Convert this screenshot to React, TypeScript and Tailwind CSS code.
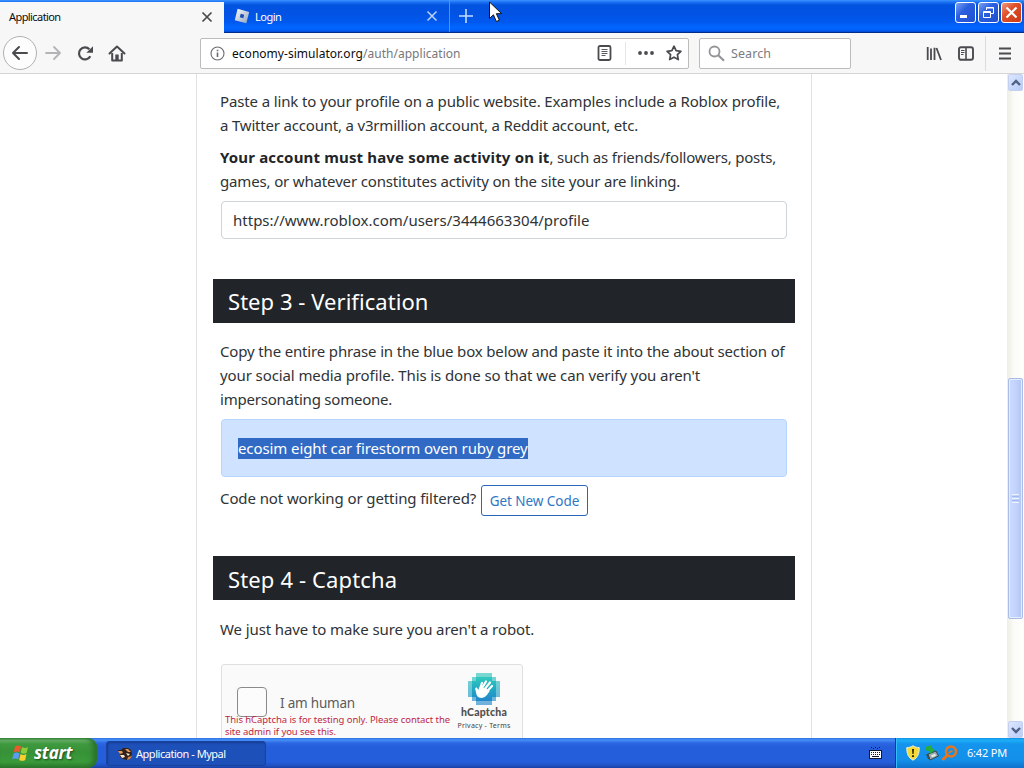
import React from 'react';

const TabBar: React.FC = () => (
  <div className="relative flex h-[33px] shrink-0 border-b border-[#002c8c] bg-[linear-gradient(180deg,#3d95ff_0px,#1b74f5_2px,#0353e0_5px,#0253e4_14px,#0058ee_22px,#0066ff_27px,#0060f8_30px,#003dc0_33px)]">
    <div className="mt-[2px] flex h-[32px] w-[224px] items-center justify-between bg-[#f7f7f8] pr-[11px] pl-[9px]">
      <span className="mb-[2px] text-[11px] tracking-[-0.580px] text-[#0c0c0d]">Application</span>
      <svg className="mb-[2px]" width="12" height="12" viewBox="0 0 12 12" stroke="#4a4a4f" strokeWidth="1.7">
        <path d="M1.5 1.5l9 9M10.5 1.5l-9 9" />
      </svg>
    </div>
    <div className="flex w-[226px] items-center border-r border-[#4f92fb] pr-[11px] pl-[10px]">
      <svg width="16" height="16" viewBox="0 0 16 16">
        <defs>
          <linearGradient id="rbx" x1="0" y1="0" x2="1" y2="1">
            <stop offset="0" stopColor="#ffffff" />
            <stop offset="1" stopColor="#8fa2bd" />
          </linearGradient>
        </defs>
        <path d="M3.600.8L15.200 3.900 12.300 15.200.8 12.200z" fill="url(#rbx)" />
        <path d="M6.700 5.800l3.500.9-.9 3.500-3.500-.9z" fill="#1a4fb0" />
      </svg>
      <span className="mt-[2px] ml-[5px] flex-1 text-[11px] tracking-[-0.500px] text-white">Login</span>
      <svg width="12" height="12" viewBox="0 0 12 12" stroke="#b9d4ff" strokeWidth="1.5">
        <path d="M1.5 1.5l9 9M10.5 1.5l-9 9" />
      </svg>
    </div>
    <svg className="mt-[9px] ml-[9px]" width="14" height="14" viewBox="0 0 14 14" stroke="#c4dbff" strokeWidth="1.6">
      <path d="M7 0v14M0 7h14" />
    </svg>
    <div className="mt-[2px] mr-[2px] ml-auto flex gap-[2px]">
      <div className="h-[21px] w-[21px] rounded-[3px] border border-white bg-[linear-gradient(135deg,#7ba2f4,#2b5fe0_40%,#1f50cf)]">
        <svg width="19" height="19" viewBox="0 0 19 19">
          <path d="M4 12h7v3H4z" fill="#fff" />
        </svg>
      </div>
      <div className="h-[21px] w-[21px] rounded-[3px] border border-white bg-[linear-gradient(135deg,#7ba2f4,#2b5fe0_40%,#1f50cf)]">
        <svg width="19" height="19" viewBox="0 0 19 19" fill="none" stroke="#fff">
          <path d="M7.500 7V4.500h7v6H12M7 5h8" />
          <path d="M4.500 8.500h7v6h-7zM4 9.500h8" />
        </svg>
      </div>
      <div className="h-[21px] w-[21px] rounded-[3px] border border-white bg-[linear-gradient(135deg,#ee9a80,#e0502a_40%,#c63a14)]">
        <svg width="19" height="19" viewBox="0 0 19 19" stroke="#fff" strokeWidth="2.200">
          <path d="M4.500 4.500l10 10M14.500 4.500l-10 10" />
        </svg>
      </div>
    </div>
    <svg className="absolute top-[1px] left-[488px] z-10" width="15" height="23" viewBox="0 0 15 23">
      <path d="M1.500 1v16.500l3.900-3.700 3 6.700 3-1.300-3-6.500h5.300z" fill="#fff" stroke="#111" />
    </svg>
  </div>
);

const Toolbar: React.FC = () => (
  <div className="flex h-[41px] shrink-0 items-center border-b border-[#d5d5d8] bg-[#f7f7f8] pl-[3px]">
    <div className="flex h-[34px] w-[34px] items-center justify-center rounded-full border border-[#b1b1b3] bg-[#fdfdfd]">
      <svg width="18" height="16" viewBox="0 0 18 16" fill="none" stroke="#4a4a4f" strokeWidth="2" strokeLinecap="round" strokeLinejoin="round">
        <path d="M16 8H2M8 2L2 8l6 6" />
      </svg>
    </div>
    <svg className="ml-[8px]" width="17" height="16" viewBox="0 0 17 16" fill="none" stroke="#b4b4b8" strokeWidth="1.800" strokeLinecap="round" strokeLinejoin="round">
      <path d="M1 8h14M9 2l6 6-6 6" />
    </svg>
    <svg className="ml-[15px]" width="17" height="17" viewBox="0 0 17 17">
      <path d="M13.300 11.200A6 6 0 1 1 12.400 4.300" fill="none" stroke="#4a4a4f" strokeWidth="2.200" />
      <path d="M16 1.200v6.600H9.400z" fill="#4a4a4f" />
    </svg>
    <svg className="ml-[14px]" width="18" height="17" viewBox="0 0 18 17">
      <path d="M1.500 8.500L9 1.500l7.500 7" fill="none" stroke="#4a4a4f" strokeWidth="2" strokeLinecap="round" strokeLinejoin="round" />
      <path d="M4.200 8v7.500h9.600V8" fill="none" stroke="#4a4a4f" strokeWidth="2" strokeLinejoin="round" />
      <path d="M7.300 9.500h3.400V16H7.300z" fill="#4a4a4f" />
    </svg>

    <div className="ml-[74px] flex h-[31px] w-[489px] items-center rounded-[2px] border border-[#bdbcb8] bg-white pl-[9px]">
      <svg width="15" height="15" viewBox="0 0 15 15" fill="none" stroke="#6b6b70">
        <circle cx="7.500" cy="7.500" r="6.500" strokeWidth="1.100" />
        <path d="M7.500 6.500V11M7.500 3.700v1.600" strokeWidth="1.600" />
      </svg>
      <span className="mt-[2px] ml-[7px] text-[12px] tracking-[0.030px] whitespace-nowrap text-[#0c0c0d]">
        economy-simulator.org<span className="text-[#77777b]">/auth/application</span>
      </span>
      <svg className="ml-auto" width="15" height="16" viewBox="0 0 15 16" fill="none" stroke="#4a4a4f">
        <rect x="1.500" y="1" width="12" height="14" rx="1.500" strokeWidth="1.800" />
        <path d="M4.500 4.500h6M4.500 6.500h6M4.500 8.500h6M4.500 10.500h4" strokeWidth="0.900" />
      </svg>
      <div className="ml-[13px] h-[23px] w-px bg-[#e6e6e8]" />
      <svg className="ml-[12px]" width="16" height="4" viewBox="0 0 16 4" fill="#4a4a4f">
        <circle cx="2" cy="2" r="1.900" />
        <circle cx="8" cy="2" r="1.900" />
        <circle cx="14" cy="2" r="1.900" />
      </svg>
      <svg className="mr-[6px] ml-[12px]" width="16" height="16" viewBox="0 0 16 16" fill="none" stroke="#4a4a4f" strokeWidth="1.700" strokeLinejoin="round">
        <path d="M8 1.200l2.100 4.500 4.800.6-3.500 3.400.9 4.900L8 12.200l-4.300 2.400.9-4.900L1.100 6.300l4.800-.6z" />
      </svg>
    </div>

    <div className="ml-[10px] flex h-[31px] w-[152px] items-center rounded-[2px] border border-[#bdbcb8] bg-white pl-[8px]">
      <svg width="17" height="17" viewBox="0 0 17 17" fill="none" stroke="#949498">
        <circle cx="6.500" cy="6.500" r="5" strokeWidth="1.800" />
        <path d="M10.300 10.300l5.700 5.500" strokeWidth="2.200" />
      </svg>
      <span className="mt-[2px] ml-[6px] text-[12.500px] tracking-[0.100px] text-[#7b7b80]">Search</span>
    </div>

    <svg className="ml-[75px]" width="16" height="15" viewBox="0 0 16 15" stroke="#4a4a4f" strokeWidth="1.800">
      <path d="M1.700 1v13M5 2.500V14M8.500 1.800V14M10.500 2l4.500 12" />
    </svg>
    <svg className="ml-[16px]" width="16" height="15" viewBox="0 0 16 15" fill="none" stroke="#4a4a4f">
      <rect x="1" y="1.200" width="14" height="12.600" rx="2" strokeWidth="1.900" />
      <path d="M8 1v13" strokeWidth="1.600" />
      <path d="M3 4.500h3.500M3 6.500h3.500M3 8.500h2.500" />
    </svg>
    <div className="ml-[11px] h-[35px] w-px bg-[#dcdcde]" />
    <svg className="ml-[13px]" width="12" height="13" viewBox="0 0 12 13" stroke="#4a4a4f" strokeWidth="1.800">
      <path d="M0 1.500h12M0 6.500h12M0 11.500h12" />
    </svg>
  </div>
);

const StepHeader: React.FC<{ title: string; className: string }> = ({ title, className }) => (
  <h3 className="-mx-[7px] flex h-[44px] items-center bg-[#212529] pl-[15px] text-[22px] text-white">
    <span className={className}>{title}</span>
  </h3>
);

const HCaptcha: React.FC = () => (
  <div className="mt-[23px] ml-px flex h-[78px] w-[302px] rounded-[3px] border border-[#e0e0e0] bg-[#fafafa]">
    <div className="w-[231px]">
      <div className="mt-[22px] ml-[15px] flex h-[27px]">
        <div className="h-[30px] w-[30px] shrink-0 rounded-[4px] border border-[#8a8a8a] bg-[#fcfcfc]" />
        <span className="ml-[13px] text-[13.500px] leading-[32px] tracking-[-0.200px] text-[#5c5c5c]">I am human</span>
      </div>
      <p className="relative ml-[3px] text-[9.500px] leading-[12px] tracking-[-0.065px] whitespace-nowrap text-[#bf1f46]">
        This hCaptcha is for testing only. Please contact the
        <br />
        site admin if you see this.
      </p>
    </div>
    <div className="flex w-[62px] flex-col items-center pt-[8px]">
      <svg width="32" height="32" viewBox="0 0 32 32">
        <defs>
          <linearGradient id="hc" x1="0" y1="0" x2="0" y2="1">
            <stop offset="0" stopColor="#33c9bd" />
            <stop offset="0.5" stopColor="#1fa9c2" />
            <stop offset="1" stopColor="#2586cc" />
          </linearGradient>
        </defs>
        <path d="M8 0h16v4h4v4h4v16h-4v4h-4v4H8v-4H4v-4H0V8h4V4h4z" fill="url(#hc)" opacity="0.650" />
        <path d="M8 4h16v4h4v16h-4v4H8v-4H4V8h4z" fill="url(#hc)" />
        <g stroke="#fff" strokeWidth="2.200" strokeLinecap="round">
          <path d="M11.500 17L14 10M13.500 16l4.500-7.500M16 17l6-7.500M18.500 19l5.500-6" />
        </g>
        <path d="M9 14.500c-1.800-.4-2.200 1-1.500 2.700.8 2 .4 4.200 1.900 6 2 2.200 5.700 2.200 8 .3 1.900-1.600 2.800-3.300 4.300-5.500l-4-3-6-.5-1.500 2.500z" fill="#fff" />
      </svg>
      <span className="mt-[1px] font-['Lato'] text-[10.500px] leading-[13px] font-black tracking-[0.200px] text-[#505050]">hCaptcha</span>
      <span className="mt-[2px] text-[7px] leading-[9px] tracking-[0.250px] whitespace-nowrap text-[#444]">Privacy - Terms</span>
    </div>
  </div>
);

const ApplicationForm: React.FC = () => (
  <div className="ml-[196px] h-full w-[616px] border-x border-[#e2e2e4] px-[23px] pt-[15px] text-[15px] leading-[24px] whitespace-nowrap text-[#2f3336]">
    <p>
      <span className="block tracking-[-0.135px]">Paste a link to your profile on a public website. Examples include a Roblox profile,</span>
      <span className="block tracking-[-0.190px]">a Twitter account, a v3rmillion account, a Reddit account, etc.</span>
    </p>
    <p className="mt-[8px]">
      <span className="block tracking-[-0.200px]">
        <b className="font-bold tracking-[0.160px] text-[#212529]">Your account must have some activity on it</b>, such as friends/followers, posts,
      </span>
      <span className="block tracking-[-0.155px]">games, or whatever constitutes activity on the site your are linking.</span>
    </p>
    <div className="mt-[8px] ml-px flex h-[38px] w-[566px] items-center rounded-[4px] border border-[#ced4da] pl-[11px] tracking-[0.010px]">
      https://www.roblox.com/users/3444663304/profile
    </div>

    <div className="mt-[40px]">
      <StepHeader title="Step 3 - Verification" className="tracking-[0.050px]" />
      <p className="mt-[16px]">
        <span className="block tracking-[-0.155px]">Copy the entire phrase in the blue box below and paste it into the about section of</span>
        <span className="block tracking-[-0.100px]">your social media profile. This is done so that we can verify you aren't</span>
        <span className="block tracking-[-0.220px]">impersonating someone.</span>
      </p>
      <div className="mt-[8px] ml-px flex h-[58px] w-[566px] items-center rounded-[4px] border border-[#b6d4fe] bg-[#cfe2ff] pl-[16px]">
        <span className="h-[21px] bg-[#316ac5] leading-[21px] tracking-[-0.100px] text-white">ecosim eight car firestorm oven ruby grey</span>
      </div>
      <div className="mt-[8px] flex h-[31px]">
        <span className="mt-[1px] w-[261px] tracking-[-0.100px]">Code not working or getting filtered?</span>
        <button className="h-[31px] w-[107px] rounded-[3px] border border-[#2968b8] text-[13.500px] leading-[30px] tracking-[-0.060px] text-[#2f76c4]">
          Get New Code
        </button>
      </div>
    </div>

    <div className="mt-[40px]">
      <StepHeader title="Step 4 - Captcha" className="mt-[2px] tracking-[0.140px]" />
      <p className="mt-[17px] tracking-[-0.100px]">We just have to make sure you aren't a robot.</p>
      <HCaptcha />
    </div>
  </div>
);

const ScrollArrow: React.FC<{ d: string }> = ({ d }) => (
  <div className="flex h-[17px] w-[15px] items-center justify-center rounded-[2px] border border-[#c4d0f0] bg-[linear-gradient(135deg,#dce6ff,#b9cbf8)]">
    <svg width="10" height="8" viewBox="0 0 10 8" fill="none" stroke="#4d6185" strokeWidth="2.400">
      <path d={d} />
    </svg>
  </div>
);

const Scrollbar: React.FC = () => (
  <div className="ml-auto flex w-[17px] flex-col items-center bg-[linear-gradient(90deg,#eeede5,#fbfbf8_40%,#fefefb)]">
    <ScrollArrow d="M1 6l4-4 4 4" />
    <div className="mt-[287px] flex h-[241px] w-[15px] flex-col items-center justify-center gap-px rounded-[2px] border border-[#a9bce8] bg-[linear-gradient(90deg,#cddbff,#c3d3fd_50%,#b3c5f3)] shadow-[inset_0_0_0_1px_#e4ecff]">
      <div className="h-px w-[7px] bg-[#eef4fe]" />
      <div className="h-px w-[7px] bg-[#a3baf0]" />
      <div className="h-px w-[7px] bg-[#eef4fe]" />
      <div className="h-px w-[7px] bg-[#a3baf0]" />
      <div className="h-px w-[7px] bg-[#eef4fe]" />
    </div>
    <div className="mt-auto">
      <ScrollArrow d="M1 2l4 4 4-4" />
    </div>
  </div>
);

const Taskbar: React.FC = () => (
  <div className="flex h-[30px] shrink-0 bg-[linear-gradient(180deg,#2f6fe4_0px,#4590f5_2px,#2c66e3_5px,#245edb_9px,#245edb_24px,#1f4fbd_28px,#1941a5_30px)]">
    <div className="flex w-[97px] items-center rounded-r-[9px] bg-[linear-gradient(180deg,#3a8e3a_0px,#6cb56c_2px,#3f9a3f_6px,#379237_14px,#3a9a3a_24px,#2b7a2b_30px)] pl-[11px] shadow-[inset_-4px_0_5px_#2a712d]">
      <svg width="19" height="18" viewBox="0 0 19 18">
        <path d="M4 2.500c2-1.300 4-1.200 6 0L8.700 8.300c-2-1.200-4-1.200-6 0z" fill="#ec5a2b" />
        <path d="M11 3c2 1.200 4 1.200 6 0L15.700 8.800c-2 1.300-4 1.200-6 0z" fill="#8ccd3a" />
        <path d="M2.500 9.500c2-1.300 4-1.200 6 0l-1.300 5.900c-2-1.200-4-1.200-6 0z" fill="#5b9af5" />
        <path d="M9.500 10c2 1.300 4 1.200 6 0l-1.300 5.900c-2 1.200-4 1.200-6 0z" fill="#f9d02f" />
      </svg>
      <span className="ml-[4px] text-[17px] leading-[20px] font-bold tracking-[-0.200px] text-white italic [text-shadow:1px_1px_2px_#1c4a1c]">start</span>
    </div>
    <div className="mt-[3px] ml-[9px] flex h-[25px] w-[160px] items-center rounded-[3px] border border-[#1a43a0] bg-[#1e50b9] pl-[11px] shadow-[inset_1px_1px_2px_#153b90]">
      <svg width="15" height="14" viewBox="0 0 15 14">
        <path d="M0 3l3 0 2-2 5 0 3 2 1 4-2 4-3 2-4-1-3-2 0-3z" fill="#33211a" />
        <path d="M0 4l4 0 1 2-3 1zM7 2l3 0 3 3-3 0z" fill="#e09a5c" />
        <path d="M2 8l4 0 1 2-3 1zM8 6l4 1-2 2z" fill="#f6e6d2" />
        <path d="M10 10l4-1-2 3-3 1z" fill="#d9823c" />
      </svg>
      <span className="mt-[2px] ml-[3px] text-[11px] tracking-[-0.470px] whitespace-nowrap text-white">Application - Mypal</span>
    </div>
    <svg className="mt-[8px] ml-auto" width="13" height="14" viewBox="0 0 13 14">
      <path d="M2 1.500h1M4 2.500h1M6 1.500h1M8 2.500h1M10 1.500h1" stroke="#101830" />
      <rect x="0.500" y="4.500" width="12" height="8" fill="#fff" stroke="#101830" />
      <path d="M2 6.500h9M2 8.500h9" stroke="#101830" strokeDasharray="1 1" />
      <path d="M3 10.500h7" stroke="#101830" />
    </svg>
    <div className="ml-[13px] flex w-[129px] items-center border-l border-[#0b3a9c] bg-[linear-gradient(180deg,#1290e8_0px,#1cb0f8_2px,#1594ee_6px,#1290ea_22px,#0f72cc_30px)] pl-[10px] shadow-[inset_1px_0_0_#36bdf8]">
      <svg width="14" height="16" viewBox="0 0 14 16">
        <path d="M7 .8c2 1.300 4 1.800 6.200 1.800.2 5.800-1.400 10-6.200 12.600C2.200 12.600.6 8.400.8 2.600 3 2.600 5 2.100 7 .8z" fill="#f5da35" stroke="#efefd8" />
        <path d="M6 4h2l-.4 5H6.400zM6 10.300h2v1.800H6z" fill="#2c2608" />
      </svg>
      <svg className="ml-[4px]" width="15" height="16" viewBox="0 0 15 16">
        <path d="M4 9l8-3 2.500 5L6 15z" fill="#9aa8ac" stroke="#35464c" />
        <path d="M7 10.300l4-1.500 1 1.900-4 1.500z" fill="#e4ecec" />
        <path d="M1 2l7-2v3l3 2-5 4-1-3-4-1z" fill="#28ad3c" />
        <path d="M3 9l2 5" stroke="#3c4c50" strokeWidth="2" />
      </svg>
      <svg className="ml-[2px]" width="17" height="16" viewBox="0 0 17 16" fill="none" stroke="#e8761c">
        <circle cx="10" cy="6.500" r="5" strokeWidth="2.500" />
        <path d="M6.500 10L1.500 15" strokeWidth="3" />
        <path d="M7.500 8l4-2.500" strokeWidth="1.500" />
      </svg>
      <span className="ml-[9px] text-[11px] tracking-[-0.200px] whitespace-nowrap text-white">6:42 PM</span>
    </div>
  </div>
);

const App: React.FC = () => {
  return (
    <div className="flex h-[768px] w-[1024px] flex-col overflow-hidden bg-white font-['Noto_Sans',sans-serif]">
      <TabBar />
      <Toolbar />
      <div className="flex h-[664px] shrink-0 overflow-hidden">
        <ApplicationForm />
        <Scrollbar />
      </div>
      <Taskbar />
    </div>
  );
};

export default App;
